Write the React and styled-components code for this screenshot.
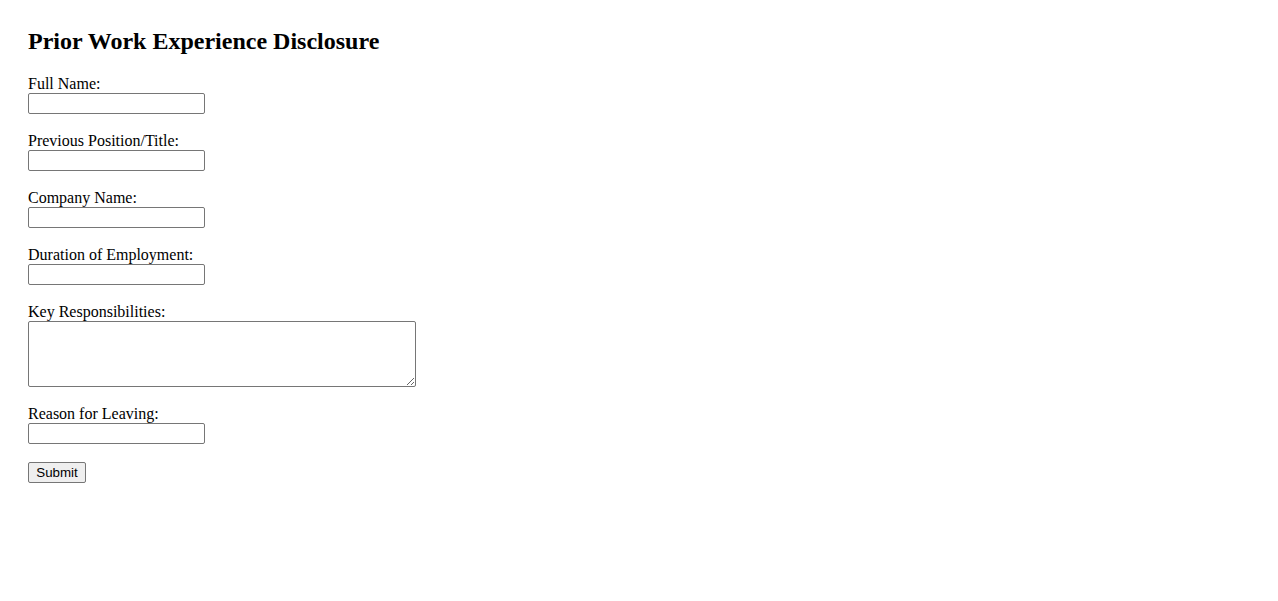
import React from "react";
import styled, { createGlobalStyle } from "styled-components";

const Global = createGlobalStyle`
  html, body { background: #fff; }
  body {
    margin: 8px;
    padding: 20px;
    font-family: "Liberation Serif", "Times New Roman", serif;
    font-size: 16px;
    color: #000;
  }
`;

const Title = styled.h2`
  margin: 0 0 0.83em;
  font-size: 24px;
  font-weight: bold;
`;

const Group = styled.div`
  margin-bottom: 18px;
`;

const Label = styled.label`
  display: block;
`;

const TextInput = styled.input`
  box-sizing: border-box;
  width: 177px;
  height: 21px;
  border: 1px solid #767676;
  border-radius: 2px;
  padding: 1px 2px;
  font-family: "Liberation Sans", Arial, sans-serif;
  font-size: 13.33px;
  vertical-align: baseline;
`;

const TextArea = styled.textarea`
  box-sizing: border-box;
  width: 388px;
  height: 66px;
  border: 1px solid #767676;
  border-radius: 2px;
  padding: 2px;
  font-family: "Liberation Mono", monospace;
  font-size: 13.33px;
  vertical-align: bottom;
`;

const Button = styled.button`
  box-sizing: border-box;
  width: 58px;
  height: 21px;
  padding: 1px 6px;
  border: 1px solid #767676;
  border-radius: 2px;
  background: #efefef;
  font-family: "Liberation Sans", Arial, sans-serif;
  font-size: 13.33px;
  color: #000;
`;

const fields = [
  "Full Name:",
  "Previous Position/Title:",
  "Company Name:",
  "Duration of Employment:",
];

export default function App() {
  return (
    <>
      <Global />
      <Title>Prior Work Experience Disclosure</Title>
      <form onSubmit={(e) => e.preventDefault()}>
        {fields.map((f) => (
          <Group key={f}>
            <Label>{f}</Label>
            <TextInput type="text" />
          </Group>
        ))}
        <Group>
          <Label>Key Responsibilities:</Label>
          <TextArea />
        </Group>
        <Group>
          <Label>Reason for Leaving:</Label>
          <TextInput type="text" />
        </Group>
        <Button type="submit">Submit</Button>
      </form>
    </>
  );
}
